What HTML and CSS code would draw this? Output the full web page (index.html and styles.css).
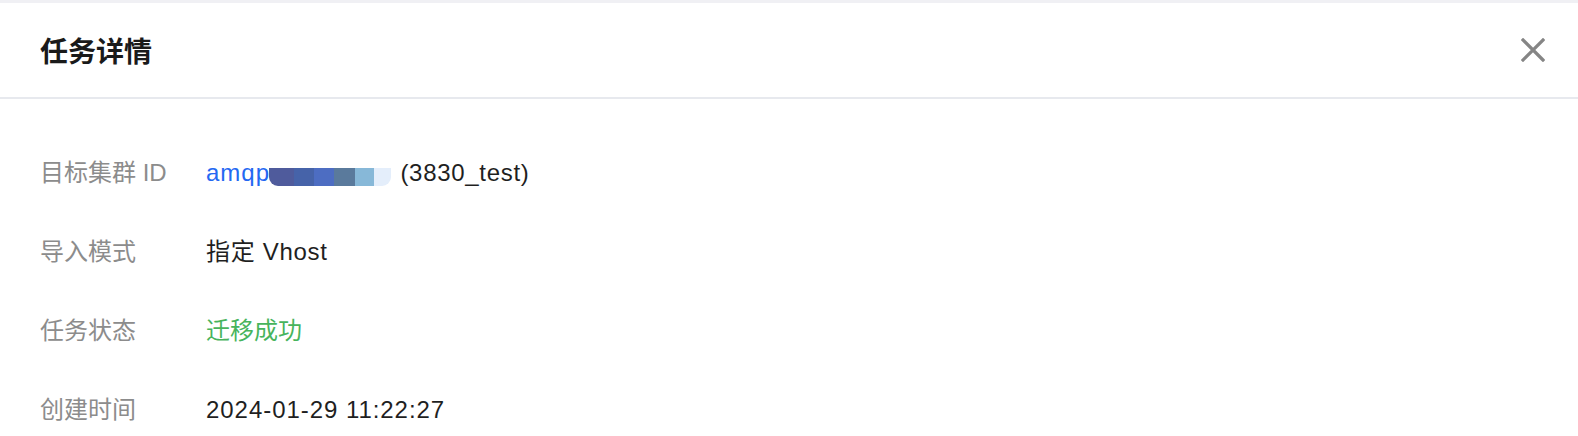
FILE: index.html
```html
<!DOCTYPE html>
<html lang="zh-CN">
<head>
<meta charset="utf-8">
<title>任务详情</title>
<link rel="stylesheet" href="styles.css">
</head>
<body>
<div class="topbar"></div>
<div class="drawer">
  <header class="drawer-header">
    <h1 class="drawer-title">任务详情</h1>
    <button class="close-btn" aria-label="关闭">
      <svg width="24" height="24" viewBox="0 0 24 24"><path d="M2 2 L22 22 M22 2 L2 22" stroke="#858585" stroke-width="3.2" fill="none" stroke-linecap="square"/></svg>
    </button>
  </header>
  <div class="drawer-body">
    <dl class="info-list">
      <dt class="label">目标集群 ID</dt>
      <dd class="value"><a class="link" href="#">amqp<span class="redact"><i class="s1"></i><i class="s2"></i><i class="s3"></i><i class="s4"></i><i class="s5"></i><i class="s6"></i></span></a> (3830_test)</dd>
      <dt class="label">导入模式</dt>
      <dd class="value">指定 Vhost</dd>
      <dt class="label">任务状态</dt>
      <dd class="value success">迁移成功</dd>
      <dt class="label">创建时间</dt>
      <dd class="value date">2024-01-29 11:22:27</dd>
    </dl>
  </div>
</div>
</body>
</html>
```
FILE: styles.css
```css
html, body {
  margin: 0;
  padding: 0;
  background: #fff;
}
body {
  font-family: "Liberation Sans", "Noto Sans CJK SC", sans-serif;
  color: #1f1f1f;
  overflow: hidden;
}
.topbar {
  height: 3px;
  background: #f0f0f4;
}
.drawer-header {
  height: 96px;
  box-sizing: border-box;
  padding: 0 33px 0 40px;
  display: flex;
  align-items: center;
  justify-content: space-between;
  border-bottom: 2px solid #e7e9ee;
}
.drawer-title {
  margin: 0;
  font-size: 28px;
  font-weight: 700;
  color: #1a1a1a;
  font-family: "Noto Sans CJK SC", sans-serif;
}
.close-btn {
  border: 0;
  background: none;
  padding: 0;
  width: 24px;
  height: 24px;
  display: flex;
  cursor: pointer;
}
.drawer-body {
  padding: 54px 40px 0 40px;
}
.info-list {
  margin: 0;
  display: grid;
  grid-template-columns: 166px 1fr;
  row-gap: 39px;
}
.label, .value {
  margin: 0;
  height: 40px;
  line-height: 40px;
  font-size: 24px;
  white-space: nowrap;
}
.label {
  color: #8c8c8c;
}
.value {
  color: #1f1f1f;
  letter-spacing: 0.7px;
}
.date {
  letter-spacing: 0.95px;
}
.success {
  color: #47b45c;
  letter-spacing: 0;
}
.link {
  color: #2468f2;
  text-decoration: none;
  letter-spacing: 1px;
}
.redact {
  display: inline-flex;
  vertical-align: middle;
  height: 18px;
  margin-top: 4px;
  margin-left: -1px;
  margin-right: 2px;
  border-radius: 0 0 9px 9px;
  overflow: hidden;
}
.redact i {
  display: block;
  height: 18px;
}
.redact .s1 { width: 25px; background: #4f5b9c; }
.redact .s2 { width: 20px; background: #4663a9; }
.redact .s3 { width: 20px; background: #4d6dc2; }
.redact .s4 { width: 21px; background: #5a7a9c; }
.redact .s5 { width: 19px; background: #87b8d8; }
.redact .s6 { width: 17px; background: #e4eefb; }
```
